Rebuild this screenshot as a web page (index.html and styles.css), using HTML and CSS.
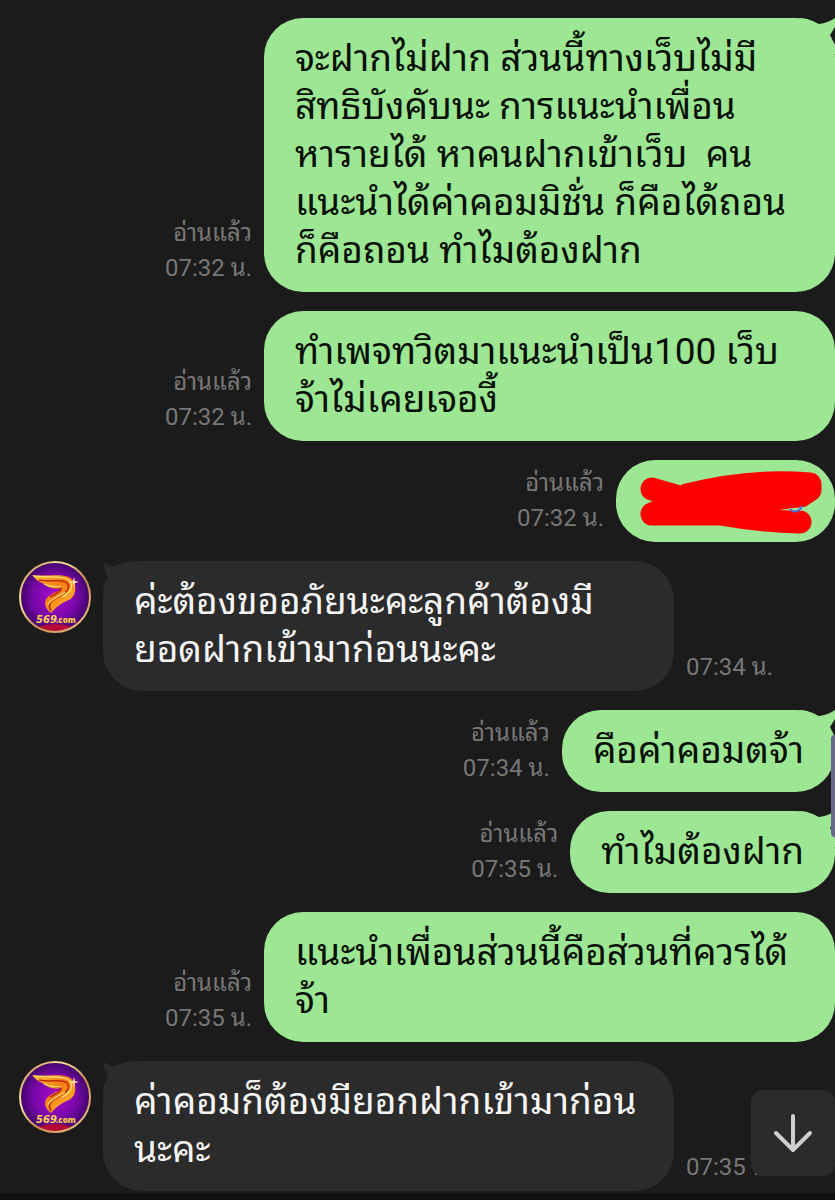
FILE: index.html
```html
<!DOCTYPE html>
<html lang="th">
<head>
<meta charset="utf-8">
<meta name="viewport" content="width=device-width, initial-scale=1">
<title>Chat</title>
<link rel="stylesheet" href="styles.css">
</head>
<body>
<svg class="defs" aria-hidden="true">
  <defs>
    <radialGradient id="purple"><stop offset="0" stop-color="#a80bd0"/><stop offset=".65" stop-color="#7607a6"/><stop offset="1" stop-color="#3d0568"/></radialGradient>
    <linearGradient id="ring" x1="0" y1="0" x2="1" y2="1"><stop offset="0" stop-color="#bd7b3d"/><stop offset=".3" stop-color="#ffe5a6"/><stop offset=".6" stop-color="#c78b4d"/><stop offset="1" stop-color="#f5cf91"/></linearGradient>
    <linearGradient id="gold" x1="0" y1="0" x2="1" y2="1"><stop offset="0" stop-color="#ffc63e"/><stop offset=".45" stop-color="#f47c12"/><stop offset=".75" stop-color="#ffa428"/><stop offset="1" stop-color="#d94806"/></linearGradient>
    <symbol id="logo" viewBox="0 0 72 72">
      <circle cx="36" cy="36" r="35" fill="url(#purple)"/>
      <path d="M18 66Q36 60 54 66Q36 76 18 66Z" fill="#b40a35"/>
      <circle cx="36" cy="36" r="35" fill="none" stroke="url(#ring)" stroke-width="2"/>
      <path d="M13 14C23 16 42 12 50 16C59 21 58 35 50 39C43 42 39 44 32 52C25 47 24 39 30 35C35 31 42 30 42 27C35 29 28 26 25 23C20 21 16 18 13 14Z" fill="url(#gold)"/>
      <path d="M20 19C34 22 42 17 48 22C53 28 45 33 37 37C30 41 29 45 32 50M42 27C43 30 37 33 31 36" fill="none" stroke="#bd2d08" stroke-width="1.6"/>
      <path d="M15 15C30 17 43 14 50 19C56 26 51 32 43 36M29 44C30 39 41 35 46 31M25 23Q34 27 42 25" fill="none" stroke="#ffe477" stroke-width="1.2"/>
      <path d="M55 16L56 20L60 21L56 22L55 26L54 22L50 21L54 20Z" fill="#ffe3a0"/>
      <text class="logo-number" x="17" y="62">569</text>
      <text class="logo-domain" x="37" y="62">.com</text>
    </symbol>
    <symbol id="tail-right" viewBox="0 0 36 36"><path d="M0 0C8 0 14 3 20 6Q29 5 36 0V9L31 17L36 27V36H0Z"/></symbol>
    <symbol id="tail-left" viewBox="0 0 32 32"><path d="M0 0Q5 5 12 5Q20 1 32 0V32H0Q0 22 5 16Q1 9 0 0Z"/></symbol>
  </defs>
</svg>
<main class="chat">
  <article class="message sent">
    <div class="meta"><span>อ่านแล้ว</span><time>07:32 น.</time></div>
    <div class="bubble wide"><svg class="tail" aria-hidden="true"><use href="#tail-right"/></svg><p>จะฝากไม่ฝาก ส่วนนี้ทางเว็บไม่มี<br>สิทธิบังคับนะ การแนะนำเพื่อน<br>หารายได้ หาคนฝากเข้าเว็บ&nbsp; คน<br>แนะนำได้ค่าคอมมิชั่น ก็คือได้ถอน<br>ก็คือถอน ทำไมต้องฝาก</p></div>
  </article>
  <article class="message sent">
    <div class="meta"><span>อ่านแล้ว</span><time>07:32 น.</time></div>
    <div class="bubble wide"><p>ทำเพจทวิตมาแนะนำเป็น100 เว็บ<br>จ้าไม่เคยเจองี้</p></div>
  </article>
  <article class="message sent">
    <div class="meta"><span>อ่านแล้ว</span><time>07:32 น.</time></div>
    <div class="bubble redacted">
      <svg class="scribble" viewBox="0 0 184 66" role="img" aria-label="ข้อความถูกปิดทับ">
        <path d="M12 21L46 31L12 46H80L164 54L100 41L160 31L168 16Q115 10 47 27Z" fill="#fe0000"/>
        <path d="M12 21L46 31L12 46H80Q120 53 160 54M47 27Q110 11 170 16V22L161 28L100 36" fill="none" stroke="#fe0000" stroke-width="23" stroke-linecap="round" stroke-linejoin="round"/>
        <path d="M139 42Q151 40 164 39L161 43Z" fill="#9de693"/>
        <path d="M150 41C153 45 160 44 162 38" fill="none" stroke="#4b70df" stroke-width="2"/>
      </svg>
    </div>
  </article>
  <article class="message received">
    <svg class="avatar" role="img" aria-label="569.com"><use href="#logo"/></svg>
    <div class="bubble wide"><svg class="tail" aria-hidden="true"><use href="#tail-left"/></svg><p>ค่ะต้องขออภัยนะคะลูกค้าต้องมี<br>ยอดฝากเข้ามาก่อนนะคะ</p></div>
    <div class="meta"><time>07:34 น.</time></div>
  </article>
  <article class="message sent">
    <div class="meta"><span>อ่านแล้ว</span><time>07:34 น.</time></div>
    <div class="bubble"><svg class="tail" aria-hidden="true"><use href="#tail-right"/></svg><p>คือค่าคอมตจ้า</p></div>
  </article>
  <article class="message sent">
    <div class="meta"><span>อ่านแล้ว</span><time>07:35 น.</time></div>
    <div class="bubble"><svg class="tail" aria-hidden="true"><use href="#tail-right"/></svg><p>ทำไมต้องฝาก</p></div>
  </article>
  <article class="message sent">
    <div class="meta"><span>อ่านแล้ว</span><time>07:35 น.</time></div>
    <div class="bubble wide"><p>แนะนำเพื่อนส่วนนี้คือส่วนที่ควรได้<br>จ้า</p></div>
  </article>
  <article class="message received">
    <svg class="avatar" role="img" aria-label="569.com"><use href="#logo"/></svg>
    <div class="bubble wide"><svg class="tail" aria-hidden="true"><use href="#tail-left"/></svg><p>ค่าคอมก็ต้องมียอกฝากเข้ามาก่อน<br>นะคะ</p></div>
    <div class="meta"><time>07:35 น.</time></div>
  </article>
</main>
<div class="scroll-thumb"></div>
<button class="jump" type="button" aria-label="เลื่อนลงล่างสุด"><svg viewBox="0 0 40 40" aria-hidden="true"><path d="M20 3V37M3 20L20 37L37 20"/></svg></button>
<footer class="bottom-edge"></footer>
</body>
</html>
```
FILE: styles.css
```css
* { box-sizing: border-box; }
body {
  margin: 0;
  min-height: 100vh;
  display: flex;
  flex-direction: column;
  background: #1b1b1b;
  font-family: Roboto, "Noto Sans Thai Looped", "Noto Sans Thai", "Noto Sans", sans-serif;
  overflow: hidden;
}
.defs { position: absolute; width: 0; height: 0; }
.chat {
  flex: 1;
  display: flex;
  flex-direction: column;
  gap: 19px;
  padding-top: 18px;
}
.message { display: flex; align-items: flex-end; gap: 12px; }
.sent { justify-content: flex-end; }
.bubble {
  position: relative;
  flex: none;
  min-height: 82px;
  padding: 17px 31px;
  border-radius: 39px;
  background: #9de693;
  color: #071006;
}
.wide { width: 571px; max-width: 70%; }
.bubble p {
  position: relative;
  margin: 0;
  font-size: 37px;
  line-height: 48px;
  white-space: nowrap;
}
.received .bubble { background: #2b2b2b; color: #f5f5f5; }
.received { padding-left: 19px; }
.avatar { flex: none; align-self: flex-start; width: 72px; height: 72px; }
.meta {
  display: flex;
  flex-direction: column;
  align-items: flex-end;
  padding-bottom: 6px;
  color: #777;
  font-size: 24px;
  line-height: 35px;
  white-space: nowrap;
}
.tail { position: absolute; top: 0; width: 36px; height: 36px; }
.sent .tail { right: 0; fill: #9de693; }
.received .tail { left: 0; width: 32px; height: 32px; fill: #2b2b2b; }
.redacted { width: 219px; padding: 8px 11px 8px 24px; }
.scribble { display: block; width: 100%; height: 66px; }
.logo-number { font: italic bold 10px "DejaVu Sans", sans-serif; fill: #ffd357; }
.logo-domain { font: 800 8px "Open Sans", sans-serif; fill: #f9c94b; }
.scroll-thumb {
  position: fixed;
  right: 0;
  top: 735px;
  width: 4px;
  height: 102px;
  border-radius: 4px 0 0 4px;
  background: #68698a;
}
.jump {
  position: fixed;
  right: 0;
  bottom: 24px;
  width: 84px;
  height: 86px;
  display: grid;
  place-items: center;
  padding: 0;
  border: 0;
  border-radius: 12px;
  background: #2b2b2b;
}
.jump svg {
  width: 40px;
  height: 40px;
  fill: none;
  stroke: #cfcfcf;
  stroke-width: 4;
  stroke-linecap: round;
  stroke-linejoin: round;
}
.bottom-edge { height: 7px; background: #111; }
```
